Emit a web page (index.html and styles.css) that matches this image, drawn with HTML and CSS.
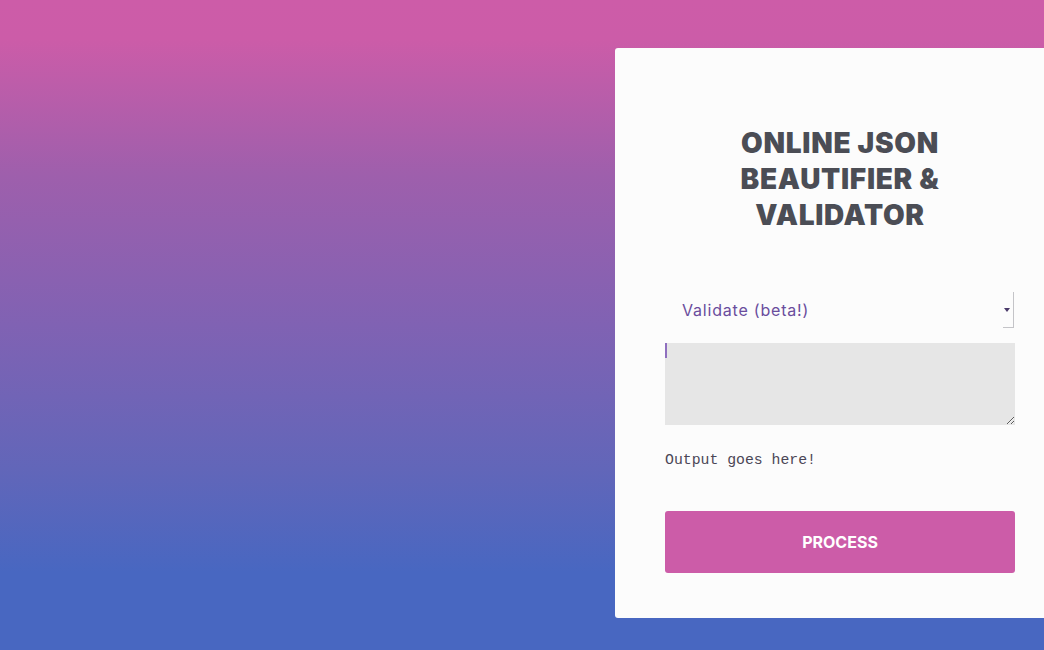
FILE: index.html
```html
<!DOCTYPE html>
<html lang="en">
<head>
<meta charset="utf-8">
<title>Online JSON Beautifier &amp; Validator</title>
<link rel="stylesheet" href="styles.css">
</head>
<body>
<div class="page">
  <div class="spacer"></div>
  <section class="card">
    <h1 class="title">ONLINE JSON<br>BEAUTIFIER &amp;<br>VALIDATOR</h1>
    <div class="select-wrap">
      <select class="mode">
        <option>Validate (beta!)</option>
        <option>Beautify</option>
      </select>
    </div>
    <div class="input-wrap">
      <textarea class="input"></textarea>
    </div>
    <pre class="output">Output goes here!</pre>
    <button class="process">PROCESS</button>
  </section>
</div>
</body>
</html>
```
FILE: styles.css
```css
html, body {
  margin: 0;
  padding: 0;
  height: 100%;
}
body {
  overflow: hidden;
  background: linear-gradient(180deg, #cd5ca8 0%, #cc5ca8 6%, #9e5fac 27%, #8062b3 50%, #6266b9 72%, #4867c1 88%, #4867c1 100%);
  font-family: Inter, "Noto Sans", sans-serif;
}
.page {
  display: grid;
  grid-template-columns: 615px 450px;
  padding-top: 48px;
  height: 650px;
  box-sizing: border-box;
}
.card {
  background: #fcfcfc;
  border-radius: 3px;
  height: 570px;
  box-sizing: border-box;
  padding: 77px 50px 0 50px;
  display: flex;
  flex-direction: column;
}
.title {
  margin: 0;
  text-align: center;
  font-family: Inter, sans-serif;
  font-weight: 900;
  font-size: 28px;
  line-height: 36px;
  color: #4b4d55;
  letter-spacing: 0.7px;
}
.select-wrap {
  position: relative;
  margin-top: 59px;
  height: 36px;
}
.select-wrap::before {
  content: "";
  position: absolute;
  right: 1px;
  top: 0;
  width: 10px;
  height: 35px;
  border-right: 1px solid #c4c4c8;
  border-bottom: 1px solid #c4c4c8;
  pointer-events: none;
}
.select-wrap::after {
  content: "";
  position: absolute;
  right: 5px;
  top: 16px;
  border-left: 3px solid transparent;
  border-right: 3px solid transparent;
  border-top: 4px solid #4a3a6a;
  pointer-events: none;
}
.mode {
  appearance: none;
  -webkit-appearance: none;
  width: 100%;
  height: 36px;
  border: none;
  background: transparent;
  padding: 0 0 0 17px;
  font-family: Inter, "Noto Sans", sans-serif;
  font-size: 16px;
  letter-spacing: 0.8px;
  color: #6a4d9d;
  outline: none;
}
.input-wrap {
  position: relative;
  margin-top: 15px;
  height: 82px;
  display: flex;
}
.input-wrap::before {
  content: "";
  position: absolute;
  left: 0;
  top: 0;
  width: 2px;
  height: 15px;
  background: #8f6fbf;
  pointer-events: none;
}
.input {
  flex: 1;
  height: 82px;
  border: none;
  background: #e6e6e6;
  box-sizing: border-box;
  resize: vertical;
  outline: none;
  padding: 0;
}
.output {
  margin: 27px 0 0 0;
  font-family: "Liberation Mono", monospace;
  font-size: 14.8px;
  line-height: 16px;
  color: #4b4656;
}
.process {
  margin-top: 43px;
  height: 62px;
  border: none;
  border-radius: 3px;
  background: #cc5ca8;
  color: #ffffff;
  font-family: Inter, sans-serif;
  font-weight: 700;
  font-size: 16px;
  cursor: pointer;
}
```
